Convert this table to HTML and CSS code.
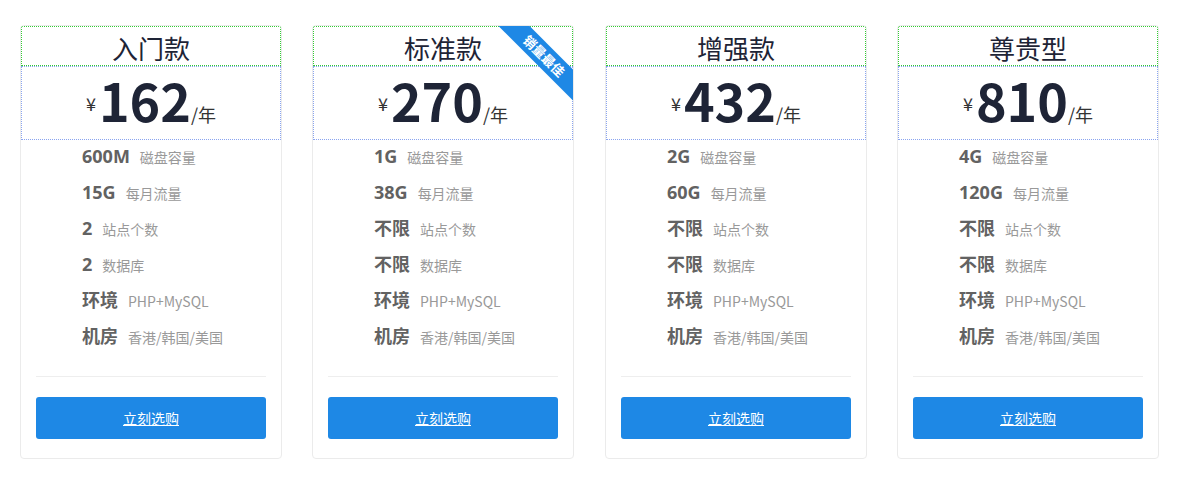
FILE: index.html
```html
<!DOCTYPE html>
<html lang="zh-CN">
<head>
<meta charset="utf-8">
<title>价格方案</title>
<link rel="stylesheet" href="styles.css">
</head>
<body>
<div class="plans">
  <div class="plan">
    <div class="plan-title">入门款</div>
    <div class="plan-price"><span class="cur">¥</span><span class="num">162</span><span class="unit">/年</span></div>
    <ul class="specs">
      <li><b>600M</b><span>磁盘容量</span></li>
      <li><b>15G</b><span>每月流量</span></li>
      <li><b>2</b><span>站点个数</span></li>
      <li><b>2</b><span>数据库</span></li>
      <li><b>环境</b><span>PHP+MySQL</span></li>
      <li><b>机房</b><span>香港/韩国/美国</span></li>
    </ul>
    <div class="plan-foot"><a class="buy" href="#">立刻选购</a></div>
  </div>
  <div class="plan">
    <div class="ribbon">销量最佳</div>
    <div class="plan-title">标准款</div>
    <div class="plan-price"><span class="cur">¥</span><span class="num">270</span><span class="unit">/年</span></div>
    <ul class="specs">
      <li><b>1G</b><span>磁盘容量</span></li>
      <li><b>38G</b><span>每月流量</span></li>
      <li><b>不限</b><span>站点个数</span></li>
      <li><b>不限</b><span>数据库</span></li>
      <li><b>环境</b><span>PHP+MySQL</span></li>
      <li><b>机房</b><span>香港/韩国/美国</span></li>
    </ul>
    <div class="plan-foot"><a class="buy" href="#">立刻选购</a></div>
  </div>
  <div class="plan">
    <div class="plan-title">增强款</div>
    <div class="plan-price"><span class="cur">¥</span><span class="num">432</span><span class="unit">/年</span></div>
    <ul class="specs">
      <li><b>2G</b><span>磁盘容量</span></li>
      <li><b>60G</b><span>每月流量</span></li>
      <li><b>不限</b><span>站点个数</span></li>
      <li><b>不限</b><span>数据库</span></li>
      <li><b>环境</b><span>PHP+MySQL</span></li>
      <li><b>机房</b><span>香港/韩国/美国</span></li>
    </ul>
    <div class="plan-foot"><a class="buy" href="#">立刻选购</a></div>
  </div>
  <div class="plan">
    <div class="plan-title">尊贵型</div>
    <div class="plan-price"><span class="cur">¥</span><span class="num">810</span><span class="unit">/年</span></div>
    <ul class="specs">
      <li><b>4G</b><span>磁盘容量</span></li>
      <li><b>120G</b><span>每月流量</span></li>
      <li><b>不限</b><span>站点个数</span></li>
      <li><b>不限</b><span>数据库</span></li>
      <li><b>环境</b><span>PHP+MySQL</span></li>
      <li><b>机房</b><span>香港/韩国/美国</span></li>
    </ul>
    <div class="plan-foot"><a class="buy" href="#">立刻选购</a></div>
  </div>
</div>
</body>
</html>
```

FILE: styles.css
```css
* { box-sizing: border-box; }
html, body { margin: 0; background: #fff; }
body {
  padding: 25px 0 0 20px;
  font-family: "Noto Sans CJK SC", "Microsoft YaHei", "Noto Sans", sans-serif;
  color: #333;
}
.plans {
  display: grid;
  grid-template-columns: 292px 293px 292px 262px;
}
.plan {
  position: relative;
  width: 262px;
  overflow: hidden;
  border: 1px solid #ebebeb;
  border-radius: 4px;
  background: #fff;
}
.plan-title {
  height: 40px;
  border: 1px dotted #33cc33;
  padding-top: 4px;
  line-height: 33px;
  font-size: 26px;
  text-align: center;
  color: #1e2436;
}
.plan-price {
  height: 74px;
  border: 1px dotted #8aa4f0;
  padding-top: 7px;
  text-align: center;
  line-height: 52px;
  color: #1e2436;
  white-space: nowrap;
}
.cur {
  font-size: 18px;
  vertical-align: 11px;
  margin-right: 3px;
  color: #333;
}
.num {
  font-size: 52px;
  font-weight: 700;
}
.unit {
  font-size: 18px;
  color: #333;
}
.specs {
  list-style: none;
  margin: 0;
  padding: 0 0 0 61px;
}
.specs li {
  height: 36px;
  line-height: 32px;
  font-size: 14px;
  white-space: nowrap;
}
.specs b {
  font-family: "Open Sans", "Noto Sans CJK SC", sans-serif;
  font-size: 18px;
  font-weight: 700;
  color: #626262;
  margin-right: 10px;
}
.specs span {
  color: #999;
}
.plan-foot {
  margin: 20px 15px 0;
  padding: 20px 0 19px;
  border-top: 1px solid #eee;
}
.buy {
  display: block;
  height: 42px;
  line-height: 42px;
  border-radius: 3px;
  background: #1e88e5;
  color: #fff;
  font-size: 14px;
  text-align: center;
  text-decoration: underline;
}
.ribbon {
  position: absolute;
  z-index: 2;
  left: 161px;
  top: 19px;
  width: 140px;
  height: 22px;
  line-height: 22px;
  transform: rotate(45deg);
  background: #1e88e5;
  color: #fff;
  font-size: 13px;
  font-weight: 700;
  text-align: center;
}
```
